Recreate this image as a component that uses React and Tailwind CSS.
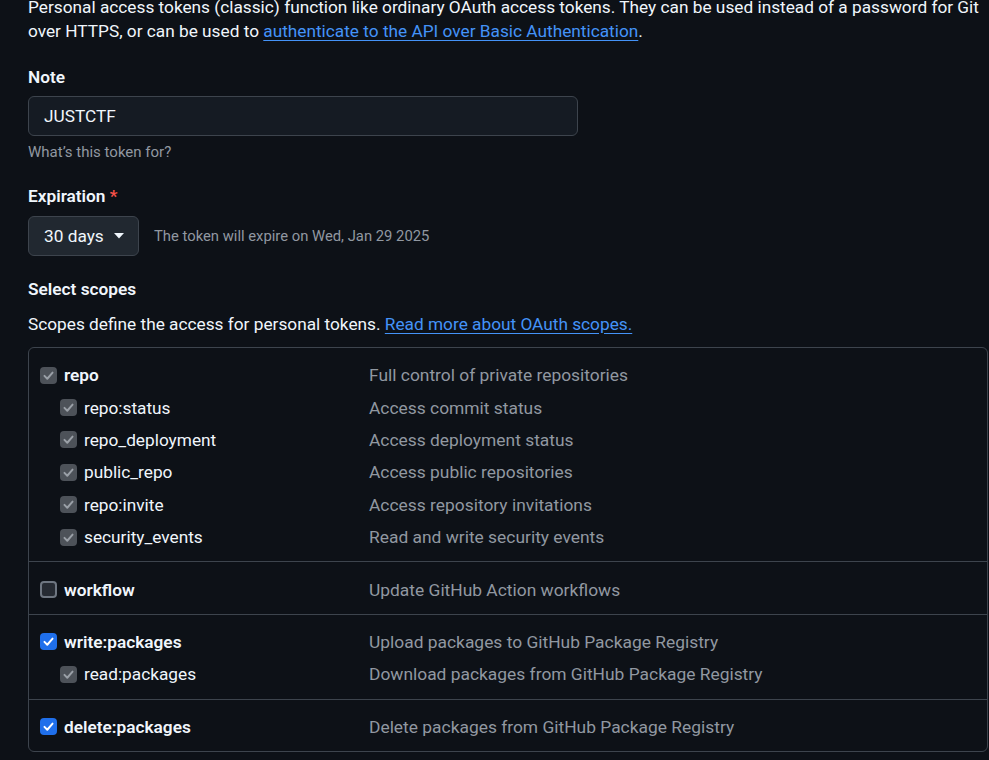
import React from 'react';

const groups = [
  [
    { name: 'repo', desc: 'Full control of private repositories', state: 'disabled', top: true },
    { name: 'repo:status', desc: 'Access commit status', state: 'disabled' },
    { name: 'repo_deployment', desc: 'Access deployment status', state: 'disabled' },
    { name: 'public_repo', desc: 'Access public repositories', state: 'disabled' },
    { name: 'repo:invite', desc: 'Access repository invitations', state: 'disabled' },
    { name: 'security_events', desc: 'Read and write security events', state: 'disabled' },
  ],
  [{ name: 'workflow', desc: 'Update GitHub Action workflows', state: 'unchecked', top: true }],
  [
    { name: 'write:packages', desc: 'Upload packages to GitHub Package Registry', state: 'checked', top: true },
    { name: 'read:packages', desc: 'Download packages from GitHub Package Registry', state: 'disabled' },
  ],
  [{ name: 'delete:packages', desc: 'Delete packages from GitHub Package Registry', state: 'checked', top: true }],
];

const Checkbox = ({ state }) => {
  if (state === 'unchecked') {
    return <span className="block w-[17px] h-[17px] rounded-[4px] border-2 border-[#6e7681] bg-[#262b33] shrink-0" />;
  }
  const checked = state === 'checked';
  return (
    <span
      className={`flex items-center justify-center w-[17px] h-[17px] rounded-[4px] shrink-0 ${
        checked ? 'bg-[#1f6feb]' : 'bg-[#4d5259]'
      }`}
    >
      <svg width="13" height="13" viewBox="0 0 16 16" fill="none">
        <polyline
          points="3,8.5 6.5,12 13,4.5"
          stroke={checked ? '#ffffff' : '#9aa0a7'}
          strokeWidth="2.4"
          strokeLinecap="round"
          strokeLinejoin="round"
        />
      </svg>
    </span>
  );
};

const ScopeRow = ({ row }) => (
  <div className="flex items-center h-[32.4px]">
    <div className={`flex items-center w-[329px] gap-[7px] ${row.top ? '' : 'pl-[20px]'}`}>
      <Checkbox state={row.state} />
      <span className={`text-[#f0f6fc] ${row.top ? 'font-semibold' : ''}`}>{row.name}</span>
    </div>
    <span className="text-[#9198a1] text-[17.4px]">{row.desc}</span>
  </div>
);

export default function App() {
  return (
    <div
      className="min-h-screen w-full overflow-hidden bg-[#0d1117] text-[#f0f6fc] text-[17.25px] leading-[24px]"
      style={{ fontFamily: 'Roboto, "Noto Sans", sans-serif' }}
    >
      <div className="pl-[28px] w-[988px]">
        <p className="mt-[-5px] whitespace-nowrap">
          Personal access tokens (classic) function like ordinary OAuth access tokens. They can be used instead of a password for Git
          <br />
          over HTTPS, or can be used to{' '}
          <a className="text-[#4493f8] underline underline-offset-[3px]">authenticate to the API over Basic Authentication</a>.
        </p>

        <label className="block mt-[22px] font-semibold">Note</label>
        <div className="mt-[7px] w-[550px] h-[40px] flex items-center px-[15px] rounded-[6px] border border-[#3d444d] bg-[#151b23]">
          JUSTCTF
        </div>
        <p className="mt-[6px] text-[15px] leading-[20px] text-[#9198a1]">What’s this token for?</p>

        <label className="block mt-[22px] font-semibold">
          Expiration <span className="text-[#f85149]">*</span>
        </label>
        <div className="mt-[8px] flex items-center gap-[15px]">
          <button className="h-[40px] w-[111px] shrink-0 whitespace-nowrap flex items-center gap-[10px] px-[15px] rounded-[6px] border border-[#3d444d] bg-[#212830] text-[#f0f6fc]">
            <span className="whitespace-nowrap">30 days</span>
            <svg width="10" height="6" viewBox="0 0 10 6" className="shrink-0">
              <polygon points="0,0 10,0 5,5.5" fill="#f0f6fc" />
            </svg>
          </button>
          <span className="text-[14.8px] text-[#9198a1]">The token will expire on Wed, Jan 29 2025</span>
        </div>

        <h3 className="mt-[21px] font-semibold">Select scopes</h3>
        <p className="mt-[11px]">
          Scopes define the access for personal tokens.{' '}
          <a className="text-[#4493f8] underline underline-offset-[3px]">Read more about OAuth scopes.</a>
        </p>

        <div className="mt-[11px] rounded-[6px] border border-[#3d444d] w-[960px]">
          {groups.map((g, i) => (
            <div key={i} className={`px-[11px] pt-[11px] pb-[8px] ${i > 0 ? 'border-t border-[#3d444d]' : ''}`}>
              {g.map((row) => (
                <ScopeRow key={row.name} row={row} />
              ))}
            </div>
          ))}
        </div>
      </div>
    </div>
  );
}
